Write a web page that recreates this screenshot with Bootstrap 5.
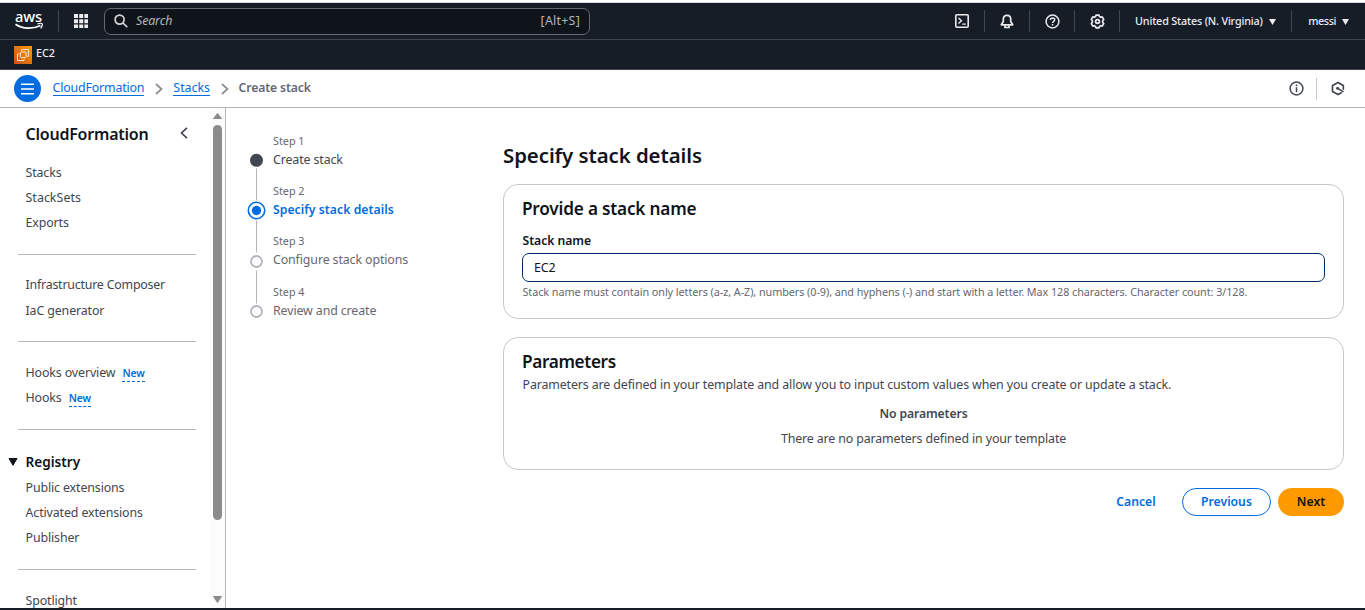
<!DOCTYPE html>
<html lang="en">
<head>
<meta charset="utf-8">
<meta name="viewport" content="width=device-width, initial-scale=1">
<title>Create stack | CloudFormation</title>
<link href="https://cdn.jsdelivr.net/npm/bootstrap@5.3.0/dist/css/bootstrap.min.css" rel="stylesheet">
<style>
  :root { --ink:#0f141a; --body:#424650; --muted:#656871; --blue:#006ce0; --rule:#c6c6cd; --dark:#161d26; }
  body { font-family:"Noto Sans",sans-serif; font-size:12.4px; letter-spacing:-.12px; line-height:18px; color:var(--body); height:610px; overflow:hidden; background:#fff; border-top:2px solid #fff; }
  a { text-decoration:none; color:inherit; }
  svg { display:block; flex:none; }
  .semi { font-weight:600; font-size:12.2px; letter-spacing:-.04px; }
  .topbar { height:38px; background:var(--dark); border-top:1px solid #dcdde0; border-bottom:1px solid #424650; color:#ebebf0; padding-left:15px; }
  .aws-logo { overflow:visible; }
  .vline { width:1px; height:22px; background:#424650; flex:none; }
  .search { width:486px; height:27px; margin-left:16px; padding:0 9px 0 9px; background:#0f141a; border:1px solid #656871; border-radius:7px; color:#b4b4bb; }
  .tool { width:45px; height:22px; border-right:1px solid #424650; }
  .top-text { font-size:10.8px; font-weight:500; letter-spacing:-.18px; margin-top:-1px; }
  .favbar { height:30px; background:var(--dark); border-bottom:1px solid #424650; padding-left:14px; color:#ebebf0; font-size:10.8px; letter-spacing:0; font-weight:500; }
  .crumbbar { height:38px; border-bottom:1px solid #b4b4bb; padding-left:14px; }
  .menu-btn { width:27px; height:27px; background:var(--blue); }
  .crumb { color:var(--blue); border-bottom:1px solid var(--blue); line-height:15px; margin-top:-1px; }
  .workarea { height:500px; }
  .sidenav { width:226px; border-right:1px solid #b4b4bb; }
  .navbody { width:210px; padding-left:18px; }
  .nav-title { height:52px; padding:0 21px 0 7.5px; }
  .nav-title h2 { font-size:16px; font-weight:600; color:var(--ink); letter-spacing:-.22px; line-height:20px; }
  .navbody ul { padding-left:7.5px; }
  .navbody li { height:25px; line-height:25px; white-space:nowrap; }
  .navbody hr { width:178px; margin:19px 0 18px; border-top:1px solid #b9b9c0; opacity:1; }
  .new-tag { font-size:10.3px; font-weight:600; color:var(--blue); border-bottom:1px dashed var(--blue); line-height:15px; letter-spacing:0; margin:2px 0 0 7px; }
  .group-head { height:25px; margin-left:-10px; color:var(--ink); font-weight:600; font-size:13.6px; letter-spacing:0; }
  .scroller { width:15px; background:#fcfcfc; padding:5px 0; }
  .thumb { width:9px; height:395px; border-radius:5px; background:#8b8b8b; margin-top:6px; }
  .stepper { width:277px; padding:24px 0 0 21px; }
  .rail { margin-top:18px; }
  .step-item { height:50.3px; color:var(--muted); }
  .step-label { font-size:10.8px; letter-spacing:0; line-height:18px; }
  .stage { padding:34px 21px 0 0; }
  .stage h1 { font-size:20.4px; font-weight:600; letter-spacing:-.06px; color:var(--ink); line-height:26px; margin-bottom:16px; }
  .panel { border:1px solid var(--rule); border-radius:15px; padding:13px 18px 0 18px; }
  .panel h2 { font-size:17.2px; font-weight:600; letter-spacing:-.2px; color:var(--ink); line-height:22px; }
  .panel-name { height:135px; margin-bottom:18px; }
  .panel-params { height:133px; }
  .form-control.name-input { height:29px; border:1px solid #002b66; border-radius:7px; font-size:12.4px; color:var(--ink); padding:0 11px; letter-spacing:-.1px; }
  .hint { font-size:10.8px; letter-spacing:-.055px; color:var(--muted); line-height:14px; white-space:nowrap; }
  .btn.act { height:28px; padding:0; border-radius:14px; font-size:12.2px; line-height:26px; font-weight:600; letter-spacing:0; }
  .act-cancel { width:60px; color:var(--blue); border:0; }
  .act-prev { width:89px; color:var(--blue); border:1px solid var(--blue); }
  .act-next { width:66px; color:var(--ink); background:#ff9900; }
  .foot-edge { height:2px; background:var(--dark); }
</style>
</head>
<body>
<header>
  <nav class="topbar d-flex align-items-center">
    <svg class="aws-logo" width="29" height="30" viewBox="0 -5 29 30"><text x="0" y="11" font-family="Noto Sans, sans-serif" font-size="15" font-weight="500" fill="#fff" textLength="27" lengthAdjust="spacingAndGlyphs">aws</text><path d="M.5 13.200c7.500 5.100 17.600 5 25 1.200" fill="none" stroke="#fff" stroke-width="1.700"/><path d="M22.500 12.900c2.200-.7 4.400-.5 4.700-.1.400.6-.1 3-1.600 4.500" fill="none" stroke="#fff" stroke-width="1.200"/></svg>
    <div class="vline" style="margin-left:14px"></div>
    <svg style="margin-left:15px" width="14" height="14" viewBox="0 0 14 14" fill="#ebebf0"><path d="M0 0h4v4H0zM5.200 0h4v4h-4zM10.400 0h4v4h-4zM0 5.200h4v4H0zM5.200 5.200h4v4h-4zM10.400 5.200h4v4h-4zM0 10.400h4v4H0zM5.200 10.400h4v4h-4zM10.400 10.400h4v4h-4z"/></svg>
    <div class="search d-flex align-items-center">
      <svg width="14" height="14" viewBox="0 0 14 14" fill="none" stroke="#d2d2d8" stroke-width="1.700"><circle cx="5.600" cy="5.600" r="4.500"/><path d="M9 9l4.200 4.200"/></svg>
      <span class="fst-italic" style="margin-left:8px">Search</span>
      <span class="ms-auto" style="letter-spacing:.25px">[Alt+S]</span>
    </div>
    <div class="ms-auto d-flex align-items-center">
      <div class="tool d-flex align-items-center justify-content-center"><svg width="14" height="14" viewBox="0 0 14 14" fill="none" stroke="#ebebf0" stroke-width="1.600"><rect x=".8" y=".8" width="12.400" height="12.400" rx="1"/><path d="M3.500 4l3 2.800-3 2.800M7.300 10.100h3.500" stroke-width="1.400"/></svg></div>
      <div class="tool d-flex align-items-center justify-content-center"><svg width="14" height="15" viewBox="0 0 14 15" fill="none" stroke="#ebebf0" stroke-width="1.700"><path d="M7 1.300c-2.300 0-3.700 1.500-3.700 3.700v2.500L1.300 10.800h11.400L10.700 7.500V5c0-2.200-1.400-3.700-3.700-3.700z" stroke-linejoin="round"/><path d="M5 11.200v2.300h4v-2.300"/></svg></div>
      <div class="tool d-flex align-items-center justify-content-center"><svg width="15" height="15" viewBox="0 0 15 15" fill="none" stroke="#ebebf0" stroke-width="1.500"><circle cx="7.500" cy="7.500" r="6.400"/><path d="M5.400 6c.1-1.300 1-2 2.200-2s2.100.8 2.100 1.800c0 1.500-2.200 1.500-2.200 3.300M7.500 10.100v1.500"/></svg></div>
      <div class="tool d-flex align-items-center justify-content-center"><svg width="15" height="15" viewBox="0 0 15 15" fill="none" stroke="#ebebf0" stroke-width="1.700" stroke-linejoin="round"><path d="M6 1.200h3l.5 1.400 1.200.7 1.500-.4 1.500 2.500-1.100 1.300v1.600l1.100 1.300-1.500 2.500-1.500-.4-1.200.7-.5 1.400H6l-.5-1.400-1.200-.7-1.500.4-1.500-2.500 1.100-1.300V6.700L1.300 5.400l1.500-2.500 1.500.4 1.200-.7z"/><circle cx="7.500" cy="7.500" r="1.900"/></svg></div>
      <div class="d-flex align-items-center top-text" style="padding-left:15px"><span>United States (N. Virginia)</span><svg style="margin:2px 0 0 6px" width="7" height="6" viewBox="0 0 7 6"><path d="M0 0h7L3.500 6z" fill="#ebebf0"/></svg></div>
      <div class="vline" style="margin:0 16px 0 15.500px"></div>
      <div class="d-flex align-items-center top-text" style="padding-right:16px;letter-spacing:-.4px"><span>messi</span><svg style="margin:2px 0 0 6px" width="7" height="6" viewBox="0 0 7 6"><path d="M0 0h7L3.500 6z" fill="#ebebf0"/></svg></div>
    </div>
  </nav>
  <div class="favbar d-flex align-items-center">
    <svg width="18" height="18" viewBox="0 0 18 18"><defs><linearGradient id="g" x1="0" y1="1" x2="1" y2="0"><stop stop-color="#c8511b"/><stop offset="1" stop-color="#f90"/></linearGradient></defs><path d="M0 0h18v18H0z" fill="url(#g)"/><g fill="none" stroke="#fff" stroke-width=".8"><rect x="6.500" y="6" width="5.500" height="5.500" rx="1"/><path d="M7.500 4.800V3.500h7v7h-1.300M5.200 8H3.500v6.500H10v-1.700"/><path d="M8 5v1M10.500 5v1M8 11.500v1M10.500 11.500v1M5.500 7.500h1M5.500 10h1M12 7.500h1M12 10h1" stroke-width=".6"/></g></svg>
    <span style="margin:-3px 0 0 4px">EC2</span>
  </div>
  <div class="crumbbar d-flex align-items-center">
    <div class="menu-btn rounded-circle d-flex align-items-center justify-content-center"><svg width="13" height="12" viewBox="0 0 13 12" stroke="#fff" stroke-width="1.600"><path d="M0 1.300h13M0 6h13M0 10.700h13"/></svg></div>
    <a href="#" class="crumb" style="margin-left:11.500px;letter-spacing:-.17px">CloudFormation</a>
    <svg style="margin:0 10px 0 11px" width="8" height="12" viewBox="0 0 8 12" fill="none" stroke="#8c8c94" stroke-width="1.700"><path d="M1 1l5.500 5L1 11"/></svg>
    <a href="#" class="crumb" style="letter-spacing:0">Stacks</a>
    <svg style="margin:0 10px 0 10.500px" width="8" height="12" viewBox="0 0 8 12" fill="none" stroke="#8c8c94" stroke-width="1.700"><path d="M1 1l5.500 5L1 11"/></svg>
    <span class="semi" style="color:#656871;letter-spacing:-.12px;margin-top:-2px">Create stack</span>
    <div class="ms-auto d-flex align-items-center" style="padding-right:20px">
      <svg width="15" height="15" viewBox="0 0 15 15" fill="none" stroke="#424650" stroke-width="1.500"><circle cx="7.500" cy="7.500" r="6.400"/><path d="M7.500 3.600v1.600M7.500 6.300v5"/></svg>
      <div class="vline" style="margin:0 14px 0 12.500px;background:#c6c6cd"></div>
      <svg width="14" height="15" viewBox="0 0 14 15" fill="none" stroke="#424650" stroke-width="1.700"><path d="M12.300 8.800V4.600L7 1.500 1.500 4.600v5.800L7 13.500l3.800-2.100"/><circle cx="6.600" cy="7.300" r="1.500" fill="#424650" stroke="none"/><path d="M6.800 7.400l5.800 3.400" stroke-width="1.500"/></svg>
    </div>
  </div>
</header>
<div class="workarea d-flex">
  <aside class="sidenav d-flex overflow-hidden flex-shrink-0">
    <div class="navbody flex-shrink-0">
      <div class="nav-title d-flex align-items-center justify-content-between">
        <h2 class="m-0">CloudFormation</h2>
        <svg style="margin-top:-2px" width="10" height="12" viewBox="0 0 10 12" fill="none" stroke="#424650" stroke-width="1.700"><path d="M8 .8L2.500 6 8 11.200"/></svg>
      </div>
      <ul class="list-unstyled m-0"><li>Stacks</li><li style="letter-spacing:.05px">StackSets</li><li>Exports</li></ul>
      <hr style="margin-bottom:17px">
      <ul class="list-unstyled m-0"><li style="letter-spacing:-.21px">Infrastructure Composer</li><li style="height:26px;line-height:27px">IaC generator</li></ul>
      <hr style="margin-top:18px">
      <ul class="list-unstyled m-0"><li class="d-flex align-items-center">Hooks overview<span class="new-tag">New</span></li><li class="d-flex align-items-center">Hooks<span class="new-tag">New</span></li></ul>
      <hr style="margin-bottom:19px">
      <div class="group-head d-flex align-items-center"><svg width="10" height="8" viewBox="0 0 10 8"><path d="M1 .5h8L5 7.300z" fill="#0f141a" stroke="#0f141a" stroke-linejoin="round"/></svg><span style="margin-left:7.500px">Registry</span></div>
      <ul class="list-unstyled m-0" style="padding-top:1px"><li>Public extensions</li><li>Activated extensions</li><li>Publisher</li></ul>
      <hr>
      <ul class="list-unstyled m-0"><li>Spotlight</li></ul>
    </div>
    <div class="scroller d-flex flex-column align-items-center flex-shrink-0">
      <svg width="9" height="6" viewBox="0 0 9 6"><path d="M4.500.5L8.500 5.500h-8z" fill="#8b8b8b" stroke="#8b8b8b" stroke-linejoin="round"/></svg>
      <div class="thumb"></div>
      <svg class="mt-auto" width="9" height="7" viewBox="0 0 9 7"><path d="M4.500 6.500L8.500.5h-8z" fill="#8b8b8b" stroke="#8b8b8b" stroke-linejoin="round"/></svg>
    </div>
  </aside>
  <div class="stepper d-flex flex-shrink-0">
    <svg class="rail" width="19" height="170" viewBox="0 0 19 170" fill="none">
      <path d="M9.500 18.500v32M9.500 70.500v32M9.500 120.500v33" stroke="#b4b4bb"/>
      <circle cx="9.500" cy="10.300" r="6.500" fill="#424650"/>
      <circle cx="9.500" cy="60.500" r="8.200" stroke="#006ce0" stroke-width="1.600"/><circle cx="9.500" cy="60.500" r="4.700" fill="#006ce0"/>
      <circle cx="9.500" cy="111.500" r="5.500" stroke="#b4b4bb" stroke-width="1.800"/>
      <circle cx="9.500" cy="161.500" r="5.500" stroke="#b4b4bb" stroke-width="1.800"/>
    </svg>
    <div style="margin-left:7px">
      <div class="step-item"><div class="step-label">Step 1</div><div style="color:#424650;margin-top:1px">Create stack</div></div>
      <div class="step-item" style="height:50px"><div class="step-label">Step 2</div><div class="semi" style="color:#006ce0;letter-spacing:.05px;margin-top:1px">Specify stack details</div></div>
      <div class="step-item" style="height:50.600px"><div class="step-label">Step 3</div><div style="margin-top:.500px">Configure stack options</div></div>
      <div class="step-item"><div class="step-label">Step 4</div><div style="margin-top:1px">Review and create</div></div>
    </div>
  </div>
  <main class="stage flex-grow-1">
    <h1>Specify stack details</h1>
    <section class="panel panel-name">
      <h2 class="m-0">Provide a stack name</h2>
      <label class="semi d-block" for="stack" style="color:#0f141a;margin:12px 0 3px .5px">Stack name</label>
      <input class="form-control name-input" id="stack" value="EC2">
      <div class="hint" style="margin:3px 0 0 .5px">Stack name must contain only letters (a-z, A-Z), numbers (0-9), and hyphens (-) and start with a letter. Max 128 characters. Character count: 3/128.</div>
    </section>
    <section class="panel panel-params">
      <h2 class="m-0" style="letter-spacing:-.35px">Parameters</h2>
      <p class="mb-0" style="margin:3px 0 0 .5px">Parameters are defined in your template and allow you to input custom values when you create or update a stack.</p>
      <div class="text-center">
        <div class="semi" style="letter-spacing:-.1px;margin:11px 0 7px">No parameters</div>
        <div style="letter-spacing:-.13px">There are no parameters defined in your template</div>
      </div>
    </section>
    <div class="d-flex justify-content-end" style="margin-top:18px">
      <button class="btn act act-cancel" style="margin-right:16px">Cancel</button>
      <button class="btn act act-prev" style="margin-right:7px">Previous</button>
      <button class="btn act act-next">Next</button>
    </div>
  </main>
</div>
<div class="foot-edge"></div>
<script src="https://cdn.jsdelivr.net/npm/bootstrap@5.3.0/dist/js/bootstrap.bundle.min.js"></script>
</body>
</html>
